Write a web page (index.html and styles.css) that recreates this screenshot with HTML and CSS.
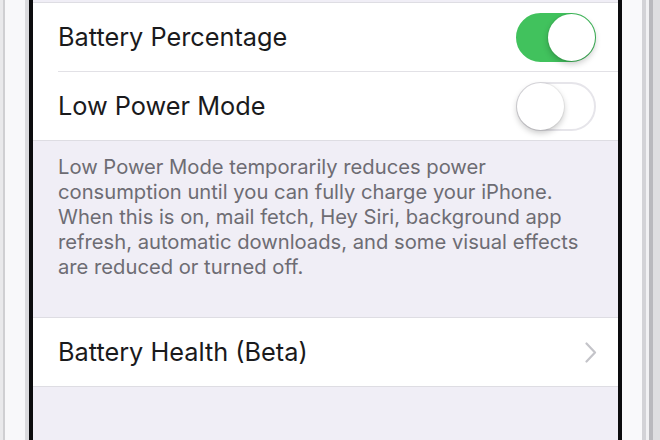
FILE: index.html
```html
<!DOCTYPE html>
<html lang="en">
  <head>
    <meta charset="UTF-8" />
    <meta name="viewport" content="width=device-width, initial-scale=1.0" />
    <title>Battery</title>

    <link rel="stylesheet" href="styles.css">
  </head>
  <body>
    <div class="phone">
      <div class="frame frame-left"></div>
      <div class="screen">
        <div class="group">
          <div class="row">
            <span class="row-title">Battery Percentage</span>
            <div class="switch on"><div class="knob"></div></div>
          </div>
          <div class="row">
            <span class="row-title">Low Power Mode</span>
            <div class="switch"><div class="knob"></div></div>
          </div>
        </div>
        <p class="footer">
          Low Power Mode temporarily reduces power consumption until you can fully charge your iPhone. When this is on, mail fetch, Hey Siri, background app refresh, automatic downloads, and some visual effects are reduced or turned off.
        </p>
        <div class="group">
          <div class="row">
            <span class="row-title">Battery Health (Beta)</span>
            <svg class="chevron" width="12" height="21" viewBox="0 0 12 21">
              <path d="M1.5 1.5 L10 10.5 L1.5 19.5" fill="none" stroke="#c4c4c9" stroke-width="2.2" stroke-linecap="round" stroke-linejoin="round" />
            </svg>
          </div>
        </div>
      </div>
      <div class="frame frame-right"></div>
    </div>
  </body>
</html>
```

FILE: styles.css
```css
html,
body {
  margin: 0;
  height: 100%;
  overflow: hidden;
}
body {
  font-family: Inter, "Noto Sans", sans-serif;
  background: #f6f6f8;
}
.phone {
  display: flex;
  height: 440px;
}
.frame {
  flex: none;
}
/* metal edge of the phone, left and right of the glass */
.frame-left {
  width: 29px;
  border-right: 4px solid #0c0c0e;
  background: linear-gradient(
    to right,
    #e9e9eb 0,
    #e9e9eb 3px,
    #cfcfd2 3px,
    #cfcfd2 5px,
    #f8f8fa 5px,
    #f8f8fa 25px,
    #dadadd 25px
  );
}
.frame-right {
  width: 38px;
  border-left: 4px solid #0c0c0e;
  background: linear-gradient(
    to right,
    #f9f9fb 0,
    #f9f9fb 20px,
    #d3d3d7 20px,
    #d3d3d7 24px,
    #f1f1f3 24px,
    #f1f1f3 27px,
    #b9b9bd 27px,
    #b9b9bd 31px,
    #dedee0 31px
  );
}
.screen {
  flex: 1;
  background: #f0eef6;
  padding-top: 2px;
}
.group {
  background: #fff;
  border-top: 1px solid #dedde3;
  border-bottom: 1px solid #dedde3;
}
.row {
  display: flex;
  align-items: center;
  justify-content: space-between;
  height: 68px;
  margin-left: 25px;
  padding-right: 22px;
}
.row + .row {
  border-top: 1px solid #e2e1e6;
}
.row-title {
  font-size: 25.3px;
  color: #1a1a1c;
  margin-top: -2px;
}
.switch {
  position: relative;
  width: 80px;
  height: 49px;
  box-sizing: border-box;
  border-radius: 25px;
  border: 2px solid #e6e5ea;
  background: #fff;
}
.switch.on {
  background: #41c25d;
  border-color: #41c25d;
}
.knob {
  position: absolute;
  top: -1px;
  left: -1px;
  width: 47px;
  height: 47px;
  border-radius: 50%;
  background: #fff;
  box-shadow: 0 3px 6px rgba(0, 0, 0, 0.22), 0 0 0 1px rgba(0, 0, 0, 0.05);
}
.switch.on .knob {
  left: auto;
  right: -1px;
}
.footer {
  margin: 0;
  padding: 13px 35px 38px 25px;
  font-size: 20.2px;
  line-height: 25px;
  color: #6d6c73;
}
.chevron {
  margin-right: -1px;
}
```
